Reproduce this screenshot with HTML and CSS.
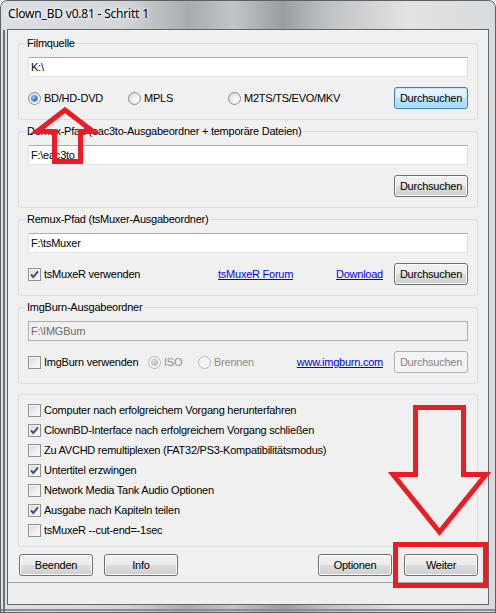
FILE: index.html
```html
<!DOCTYPE html>
<html lang="de">
<head>
    <meta charset="UTF-8">
    <title>Clown_BD v0.81 - Schritt 1</title>
    <link rel="stylesheet" href="styles.css">
</head>
<body>
    <div class="window">
        <div class="titlebar">Clown_BD v0.81 - Schritt 1</div>
        <div class="client">
            <div class="content">
                <fieldset class="group">
                    <legend>Filmquelle</legend>
                    <input class="textbox" type="text" value="K:\" readonly>
                    <div class="row">
                        <label class="option w100"><span class="radio checked"></span>BD/HD-DVD</label>
                        <label class="option w100"><span class="radio"></span>MPLS</label>
                        <label class="option"><span class="radio"></span>M2TS/TS/EVO/MKV</label>
                        <button class="btn focused push">Durchsuchen</button>
                    </div>
                </fieldset>

                <fieldset class="group">
                    <legend>Demux-Pfad (eac3to-Ausgabeordner + temporäre Dateien)</legend>
                    <input class="textbox" type="text" value="F:\eac3to" readonly>
                    <div class="row">
                        <button class="btn push">Durchsuchen</button>
                    </div>
                </fieldset>

                <fieldset class="group">
                    <legend>Remux-Pfad (tsMuxer-Ausgabeordner)</legend>
                    <input class="textbox" type="text" value="F:\tsMuxer" readonly>
                    <div class="row">
                        <label class="option w190"><span class="checkbox checked"><svg viewBox="0 0 13 13"><path d="M3 6.5 L5.3 9 L10 3.3"/></svg></span>tsMuxeR verwenden</label>
                        <a class="link" href="#">tsMuxeR Forum</a>
                        <a class="link push gap" href="#">Download</a>
                        <button class="btn">Durchsuchen</button>
                    </div>
                </fieldset>

                <fieldset class="group">
                    <legend>ImgBurn-Ausgabeordner</legend>
                    <input class="textbox disabled" type="text" value="F:\IMGBurn" readonly>
                    <div class="row">
                        <label class="option w120"><span class="checkbox"></span>ImgBurn verwenden</label>
                        <label class="option w50 off"><span class="radio checked"></span>ISO</label>
                        <label class="option off"><span class="radio"></span>Brennen</label>
                        <a class="link push gap" href="#">www.imgburn.com</a>
                        <button class="btn" disabled>Durchsuchen</button>
                    </div>
                </fieldset>

                <fieldset class="group plain">
                    <label class="option line"><span class="checkbox"></span>Computer nach erfolgreichem Vorgang herunterfahren</label>
                    <label class="option line"><span class="checkbox checked"><svg viewBox="0 0 13 13"><path d="M3 6.5 L5.3 9 L10 3.3"/></svg></span>ClownBD-Interface nach erfolgreichem Vorgang schließen</label>
                    <label class="option line"><span class="checkbox"></span>Zu AVCHD remultiplexen (FAT32/PS3-Kompatibilitätsmodus)</label>
                    <label class="option line"><span class="checkbox checked"><svg viewBox="0 0 13 13"><path d="M3 6.5 L5.3 9 L10 3.3"/></svg></span>Untertitel erzwingen</label>
                    <label class="option line"><span class="checkbox"></span>Network Media Tank Audio Optionen</label>
                    <label class="option line"><span class="checkbox checked"><svg viewBox="0 0 13 13"><path d="M3 6.5 L5.3 9 L10 3.3"/></svg></span>Ausgabe nach Kapiteln teilen</label>
                    <label class="option line"><span class="checkbox"></span>tsMuxeR --cut-end=-1sec</label>
                </fieldset>

                <div class="actions">
                    <button class="btn">Beenden</button>
                    <button class="btn">Info</button>
                    <button class="btn push">Optionen</button>
                    <button class="btn">Weiter</button>
                </div>
            </div>
            <div class="statusbar"></div>
        </div>

        <!-- rote Markierungen aus dem Screenshot -->
        <svg class="marks" width="496" height="613" viewBox="0 0 496 613">
            <polygon points="65,110 93,131.5 80.5,131.5 80.5,161.5 54.5,161.5 54.5,131.5 37,131.5"/>
            <polygon points="415.5,407.5 463.5,407.5 463.5,474.5 486,474.5 439.5,532 393,474.5 415.5,474.5"/>
            <rect x="395.5" y="544.5" width="90" height="41"/>
        </svg>
    </div>
</body>
</html>
```

FILE: styles.css
```css
body {
    margin: 0;
    font-family: "Liberation Sans", Arial, sans-serif;
    font-size: 11px;
    letter-spacing: -0.24px;
    color: #000;
}
.window {
    position: relative;
    width: 496px;
    height: 613px;
    box-sizing: border-box;
    padding: 0 7px 8px 7px;
    border-radius: 7px 7px 0 0;
    background:
        linear-gradient(#6f7275, #6f7275) 3px 30px / 2px 100% no-repeat,
        linear-gradient(#8a8d90, #8a8d90) 0 609px / 100% 2px no-repeat,
        linear-gradient(90deg, #dde0e3 0%, #d3d6d9 25%, #a9acaf 38%, #c2c5c8 47%, #9b9ea1 57%, #bfc2c4 66%, #e0e2e4 82%, #d8dbdd 100%);
    box-shadow: inset 0 0 0 1px #5d6064;
}
.titlebar {
    height: 29px;
    box-sizing: border-box;
    padding: 5px 0 0 1px;
    line-height: 18px;
    font-family: "Noto Sans", sans-serif;
    font-size: 12px;
    letter-spacing: -0.2px;
    text-shadow: 0 0 6px #fff, 0 0 3px #fff;
}
.client {
    height: 576px;
    box-sizing: border-box;
    border: 1px solid #63676b;
    background: #f0f0f0;
    display: flex;
    flex-direction: column;
}
.content {
    padding: 6px 10px 0 10px;
}
.group {
    margin: 0 0 4px 0;
    padding: 6px 9px 10px 9px;
    border: 1px solid #d5dfe5;
    border-radius: 3px;
    min-width: 0;
}
.group legend {
    padding: 0 2px;
    margin-left: -3px;
    line-height: 15px;
}
.group.plain {
    margin-top: 10px;
    padding: 5px 9px 6px 9px;
}
.textbox {
    display: block;
    width: 100%;
    height: 20px;
    box-sizing: border-box;
    margin: 0;
    padding: 0 2px;
    border: 1px solid;
    border-color: #abadb3 #dbdfe6 #e3e9ef #e2e3ea;
    background: #fff;
    font: inherit;
    letter-spacing: inherit;
    color: #000;
    outline: none;
}
.textbox.disabled {
    background: #f0f0f0;
    border-color: #afafaf;
    color: #6d6d6d;
}
.row {
    display: flex;
    align-items: center;
    height: 22px;
    margin-top: 10px;
}
.option {
    display: flex;
    align-items: center;
    white-space: nowrap;
}
.option.line {
    height: 20px;
}
.w50 { width: 50px; }
.w100 { width: 100px; }
.w120 { width: 120px; }
.w190 { width: 190px; }
.option.off {
    color: #8d8d8d;
}
.radio,
.checkbox {
    width: 13px;
    height: 13px;
    box-sizing: border-box;
    margin-right: 3px;
    flex: none;
    display: flex;
    align-items: center;
    justify-content: center;
}
.radio {
    border-radius: 50%;
    border: 1px solid #8e8f8f;
    background: radial-gradient(circle at 65% 65%, #fdfdfd 0%, #e8e8e8 55%, #cfcfcf 100%);
}
.radio.checked::after {
    content: "";
    width: 5px;
    height: 5px;
    border-radius: 50%;
    background: radial-gradient(circle at 35% 35%, #b6e6ff 0%, #2a87d8 45%, #0b3f8a 100%);
    box-shadow: 0 0 0 1px #6d9fce;
}
.off .radio {
    border-color: #b8b8b8;
    background: #f4f4f4;
}
.off .radio.checked::after {
    background: radial-gradient(circle at 35% 35%, #e4e4e4 0%, #a8a8a8 100%);
    box-shadow: 0 0 0 1px #c2c2c2;
}
.checkbox {
    border: 1px solid #8e8f8f;
    background: linear-gradient(135deg, #d7d7d7 0%, #ececec 55%, #fafafa 100%);
    box-shadow: inset 0 0 0 1px #f4f4f4;
}
.checkbox svg {
    width: 13px;
    height: 13px;
    flex: none;
}
.checkbox path {
    fill: none;
    stroke: #3b4c80;
    stroke-width: 1.9;
}
.link {
    color: #0000ff;
    text-decoration: underline;
}
.btn {
    width: 74px;
    height: 22px;
    box-sizing: border-box;
    margin: 0;
    padding: 0;
    font: inherit;
    letter-spacing: inherit;
    color: #000;
    border: 1px solid #707070;
    border-radius: 3px;
    background: linear-gradient(#f2f2f2 0%, #ebebeb 48%, #dddddd 50%, #cfcfcf 100%);
    box-shadow: inset 0 0 0 1px #fbfbfb;
    flex: none;
}
.btn.focused {
    border-color: #3c7fb1;
    background: linear-gradient(#eaf6fd 0%, #d9f0fc 48%, #bee6fd 50%, #a7d9f5 100%);
    box-shadow: inset 0 0 0 1px #c4e5f6;
}
.btn:disabled {
    border-color: #adb2b5;
    background: #f4f4f4;
    box-shadow: none;
    color: #838383;
}
.push {
    margin-left: auto;
}
.gap {
    margin-right: 11px;
}
.actions {
    display: flex;
    margin: 7px 0 0 1px;
    gap: 11px;
}
.actions .push {
    margin-right: 1px;
}
.statusbar {
    margin-top: auto;
    height: 21px;
    border-top: 1px solid #a0a0a0;
    background: #f0eeed;
}
.marks {
    position: absolute;
    left: 0;
    top: 0;
    pointer-events: none;
}
.marks polygon,
.marks rect {
    fill: none;
    stroke: #ec1c24;
    stroke-width: 5;
    stroke-linejoin: miter;
}
```
